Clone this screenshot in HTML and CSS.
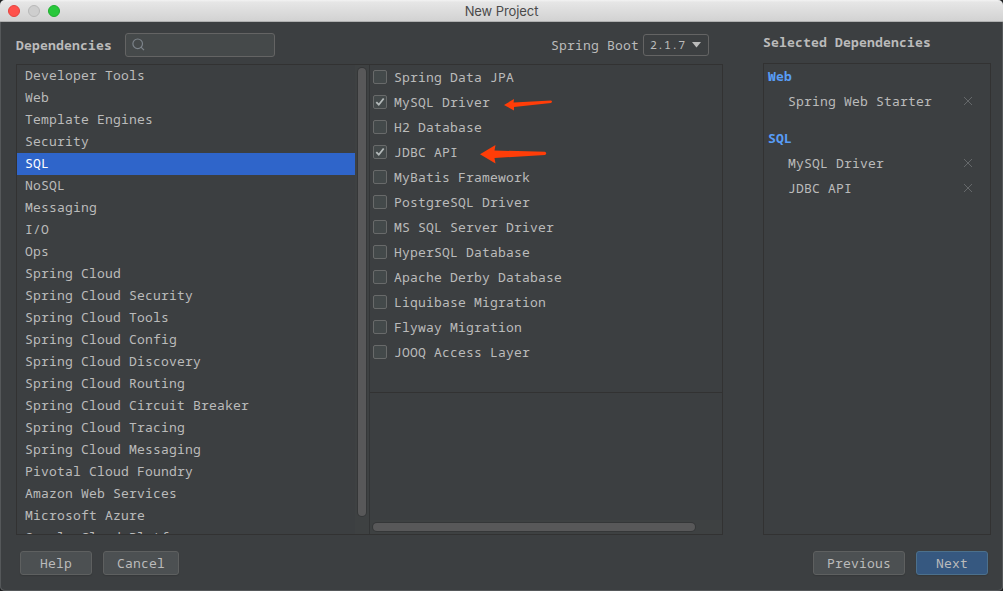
FILE: index.html
```html
<!DOCTYPE html>
<html lang="en">
<head>
<meta charset="utf-8">
<title>New Project</title>
<link rel="stylesheet" href="styles.css">
</head>
<body>
<div class="window">
  <header class="titlebar">
    <div class="lights"><i class="light close"></i><i class="light minimize"></i><i class="light expand"></i></div>
    <span class="title">New Project</span>
  </header>
  <main class="content">
    <section class="chooser">
      <div class="toolbar">
        <b class="label">Dependencies</b>
        <div class="search"><svg width="14" height="14" viewBox="0 0 14 14"><circle cx="5.7" cy="5.8" r="4.8"/><path d="M9 9.2L12 12.2"/></svg></div>
        <span class="boot">Spring Boot</span>
        <div class="select"><span>2.1.7</span><svg width="9" height="6" viewBox="0 0 9 6"><path d="M0 0h9L4.5 5.5z"/></svg></div>
      </div>
      <div class="panels">
        <div class="categories">
          <ul class="category-list">
            <li>Developer Tools</li><li>Web</li><li>Template Engines</li><li>Security</li><li class="selected">SQL</li><li>NoSQL</li><li>Messaging</li><li>I/O</li><li>Ops</li><li>Spring Cloud</li><li>Spring Cloud Security</li><li>Spring Cloud Tools</li><li>Spring Cloud Config</li><li>Spring Cloud Discovery</li><li>Spring Cloud Routing</li><li>Spring Cloud Circuit Breaker</li><li>Spring Cloud Tracing</li><li>Spring Cloud Messaging</li><li>Pivotal Cloud Foundry</li><li>Amazon Web Services</li><li>Microsoft Azure</li><li>Google Cloud Platform</li>
          </ul>
          <div class="vtrack"><div class="vthumb"></div></div>
        </div>
        <div class="options">
          <ul class="option-list">
            <li><i class="box"></i>Spring Data JPA</li>
            <li><i class="box"><svg viewBox="0 0 12 12"><path d="M2.3 6.1L4.8 8.7L9.7 2.5"/></svg></i>MySQL Driver<svg class="arrow small" width="49" height="14" viewBox="0 0 49 14"><path d="M0 7L10 1L9.6 4.6L47 2.6Q49 3.7 47 5L10 9L10 12.5Z"/></svg></li>
            <li><i class="box"></i>H2 Database</li>
            <li><i class="box"><svg viewBox="0 0 12 12"><path d="M2.3 6.1L4.8 8.7L9.7 2.5"/></svg></i>JDBC API<svg class="arrow large" width="67" height="20" viewBox="0 0 67 20"><path d="M0 10.3L15.5 1L14.5 6.5L65 7.8Q67.5 9.5 65 11L14.5 14L15.5 19.5Z"/></svg></li>
            <li><i class="box"></i>MyBatis Framework</li>
            <li><i class="box"></i>PostgreSQL Driver</li>
            <li><i class="box"></i>MS SQL Server Driver</li>
            <li><i class="box"></i>HyperSQL Database</li>
            <li><i class="box"></i>Apache Derby Database</li>
            <li><i class="box"></i>Liquibase Migration</li>
            <li><i class="box"></i>Flyway Migration</li>
            <li><i class="box"></i>JOOQ Access Layer</li>
          </ul>
          <div class="description"><div class="htrack"><div class="hthumb"></div></div></div>
        </div>
      </div>
    </section>
    <section class="summary">
      <b class="summary-title">Selected Dependencies</b>
      <div class="summary-panel">
        <b class="group">Web</b>
        <div class="item"><span>Spring Web Starter</span><svg class="remove" viewBox="0 0 8 8"><path d="M0 0L8 8M8 0L0 8"/></svg></div>
        <b class="group next-group">SQL</b>
        <div class="item"><span>MySQL Driver</span><svg class="remove" viewBox="0 0 8 8"><path d="M0 0L8 8M8 0L0 8"/></svg></div>
        <div class="item"><span>JDBC API</span><svg class="remove" viewBox="0 0 8 8"><path d="M0 0L8 8M8 0L0 8"/></svg></div>
      </div>
    </section>
  </main>
  <footer class="footer">
    <button class="btn help">Help</button>
    <button class="btn cancel">Cancel</button>
    <button class="btn previous">Previous</button>
    <button class="btn primary">Next</button>
  </footer>
</div>
</body>
</html>
```
FILE: styles.css
```css
* { box-sizing: border-box; }
body { margin: 0; background: #202122; overflow: hidden; }
ul { list-style: none; margin: 0; padding: 0; }
svg { display: block; flex: none; }
.window {
  width: 1003px; height: 591px; display: flex; flex-direction: column;
  border-radius: 5px; overflow: hidden; background: #3c3f41;
  box-shadow: inset 1px 0 #55585a, inset -1px 0 #55585a, inset 0 -1px #55585a;
  font: 13px/22px "Noto Sans Mono", "DejaVu Sans Mono", monospace;
  letter-spacing: 0.2px; color: #bbb; white-space: nowrap;
}
.titlebar {
  height: 22px; flex: none; display: grid; grid-template-columns: 1fr auto 1fr;
  align-items: center; background: linear-gradient(#f3f3f3, #e6e6e6 10%, #d2d2d2);
  border-bottom: 1px solid #afb0b0;
}
.lights { display: flex; gap: 8px; padding-left: 8px; }
.light { width: 12px; height: 12px; border-radius: 50%; border: 1px solid; }
.close { background: #ff524c; border-color: #e3443f; }
.minimize { background: #cecece; border-color: #b8b8b8; }
.expand { background: #28c83b; border-color: #1fad2f; }
.title { font: 13px/20px Inter, "Liberation Sans", sans-serif; letter-spacing: -0.08px; color: #4a4a4a; padding-top: 1px; }
.content { display: flex; height: 513px; padding-left: 16px; }
.chooser { width: 707px; display: flex; flex-direction: column; }
.toolbar { height: 42px; display: flex; align-items: center; padding: 4px 14px 0 0; }
.label { width: 109px; }
.search {
  width: 150px; height: 24px; display: flex; align-items: center; padding-left: 6px;
  border: 1px solid #646464; border-radius: 3px; background: #45494a;
}
.search svg { fill: none; stroke: #7c838a; stroke-width: 1.2; }
.boot { margin-left: auto; margin-right: 4px; }
.select {
  width: 66px; height: 22px; display: flex; align-items: center; justify-content: space-between;
  padding: 0 7px 0 6px; border: 1px solid #646464; border-radius: 3px;
  font-size: 11.5px; letter-spacing: 0.15px;
}
.select svg { fill: #bbb; }
.panels { height: 471px; display: flex; border: 1px solid #323232; }
.categories { width: 353px; display: flex; border-right: 1px solid #323435; }
.category-list { width: 338px; height: 469px; overflow: hidden; }
.category-list li { height: 22px; line-height: 20px; padding-left: 8px; }
.category-list .selected { background: #2f65ca; color: #fff; }
.vtrack { flex: 1; padding: 3px 2px 0 3px; background: #3e4142; }
.vthumb { width: 8px; height: 448px; border-radius: 4px; background: #585859; box-shadow: 0 0 0 1px #353738; }
.options { flex: 1; display: flex; flex-direction: column; }
.option-list { height: 327px; }
.option-list li { height: 25px; line-height: 25px; display: flex; align-items: center; padding-left: 3px; }
.box { width: 14px; height: 14px; margin: -1px 7px 0 0; border: 1px solid #686a6a; border-radius: 2px; background: #43494a; }
.box svg { fill: none; stroke: #b4baba; stroke-width: 1.8; }
.arrow { fill: #ff3d08; }
.small { margin: 4px 0 0 14px; }
.large { margin: 3px 0 0 21.5px; }
.description { flex: 1; display: flex; flex-direction: column; justify-content: flex-end; border-top: 1px solid #323232; }
.htrack { height: 14px; padding: 3px; background: #3e4142; }
.hthumb { width: 322px; height: 8px; border-radius: 4px; background: #585859; box-shadow: 0 0 0 1px #353738; }
.summary { width: 228px; margin-left: 40px; display: flex; flex-direction: column; }
.summary-title { height: 41px; padding-top: 9px; }
.summary-panel { height: 472px; border: 1px solid #323232; display: flex; flex-direction: column; line-height: 25px; }
.group { height: 25px; padding-left: 4px; color: #589df6; }
.next-group { margin-top: 12px; }
.item { height: 25px; display: flex; align-items: center; justify-content: space-between; padding: 0 18px 0 24px; }
.remove { width: 8px; height: 8px; margin-top: -1px; overflow: visible; stroke: #65686a; stroke-width: 1; }
.footer { flex: 1; display: flex; align-items: flex-start; gap: 11px; padding: 16px 15px 0 20px; }
.btn {
  height: 24px; padding: 0; border: 1px solid #5e6060; border-radius: 3px;
  background: #4c5052; color: #bbb; font: inherit; letter-spacing: inherit;
  box-shadow: 0 1px 1px #35383a;
}
.help, .primary { width: 72px; }
.cancel { width: 76px; }
.previous { width: 92px; margin-left: auto; }
.primary { background: #365880; border-color: #4c708c; }
```
